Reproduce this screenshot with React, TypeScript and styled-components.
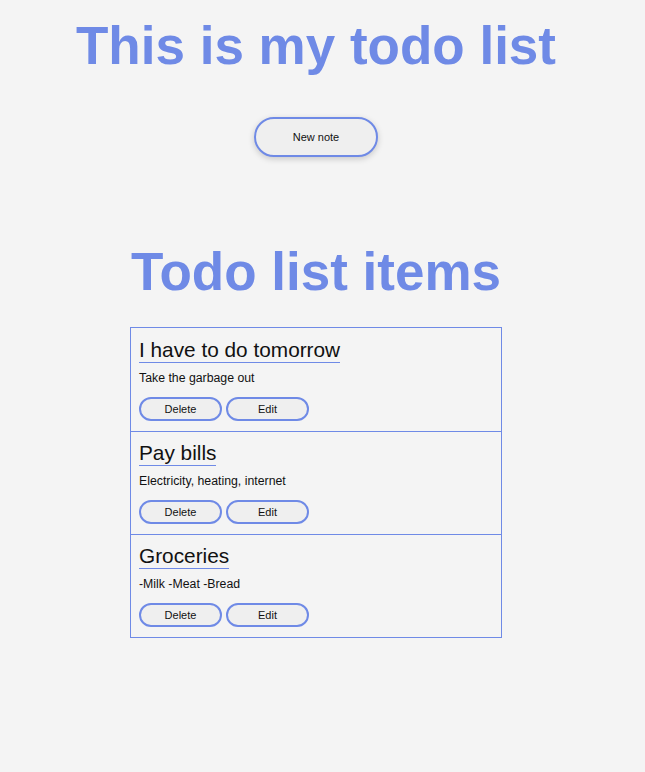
import React from "react";
import styled, { createGlobalStyle } from "styled-components";

const accent = "#6f8ae6";

const GlobalStyle = createGlobalStyle`
  html, body {
    margin: 0;
    padding: 0;
    background: #f4f4f4;
    font-family: "Liberation Sans", Arial, sans-serif;
    color: #111;
  }
`;

const Page = styled.div`
  width: 632px;
  padding-top: 15px;
  display: flex;
  flex-direction: column;
  align-items: center;
`;

const Title = styled.h1`
  margin: 0;
  font-size: 53px;
  line-height: 61px;
  font-weight: 700;
  color: ${accent};
  white-space: nowrap;
`;

const SubTitle = styled.h2`
  margin: 84px 0 0;
  font-size: 53px;
  line-height: 61px;
  font-weight: 700;
  color: ${accent};
  white-space: nowrap;
`;

const PillButton = styled.button<{ $w: number; $h: number }>`
  box-sizing: border-box;
  width: ${(p) => p.$w}px;
  height: ${(p) => p.$h}px;
  border: 2px solid ${accent};
  border-radius: 999px;
  background: #efefef;
  font-family: "Liberation Sans", Arial, sans-serif;
  font-size: 11px;
  color: #111;
  padding: 0;
  cursor: pointer;
`;

const NewNote = styled(PillButton)`
  margin-top: 41px;
  box-shadow: 0 2px 6px rgba(0, 0, 0, 0.18);
`;

const List = styled.div`
  box-sizing: border-box;
  margin-top: 25px;
  width: 372px;
  border: 1px solid ${accent};
`;

const Item = styled.div`
  padding: 9px 8px 10px;
  border-bottom: 1px solid ${accent};
  &:first-child {
    padding-top: 10px;
  }
  &:last-child {
    border-bottom: none;
  }
`;

const ItemTitle = styled.h3`
  display: inline-block;
  margin: 0;
  font-size: 20.8px;
  line-height: 24px;
  font-weight: 400;
  border-bottom: 1px solid ${accent};
`;

const ItemText = styled.p`
  margin: 8px 0 0;
  font-size: 12.3px;
  line-height: 14px;
`;

const Actions = styled.div`
  display: flex;
  gap: 4px;
  margin-top: 12px;
`;

const todos = [
  { title: "I have to do tomorrow", text: "Take the garbage out" },
  { title: "Pay bills", text: "Electricity, heating, internet" },
  { title: "Groceries", text: "-Milk -Meat -Bread" },
];

export default function App() {
  return (
    <>
      <GlobalStyle />
      <Page>
        <Title>This is my todo list</Title>
        <NewNote $w={124} $h={40}>New note</NewNote>
        <SubTitle>Todo list items</SubTitle>
        <List>
          {todos.map((t) => (
            <Item key={t.title}>
              <ItemTitle>{t.title}</ItemTitle>
              <ItemText>{t.text}</ItemText>
              <Actions>
                <PillButton $w={83} $h={24}>Delete</PillButton>
                <PillButton $w={83} $h={24}>Edit</PillButton>
              </Actions>
            </Item>
          ))}
        </List>
      </Page>
    </>
  );
}
